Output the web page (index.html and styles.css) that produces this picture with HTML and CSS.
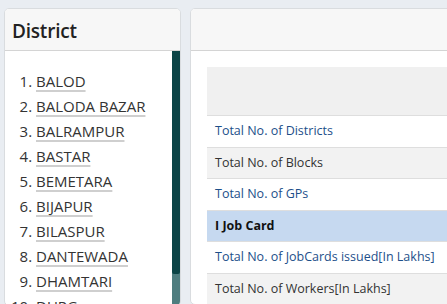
FILE: index.html
```html
<!DOCTYPE html>
<html>
<head>
<meta charset="utf-8">
<link rel="stylesheet" href="styles.css">
</head>
<body>
<div class="layout">
  <section class="card card-district">
    <header class="card-head"><h2 class="card-title">District</h2></header>
    <div class="card-scroll">
      <ol class="district-list">
        <li><a href="#">BALOD</a></li>
        <li><a href="#">BALODA BAZAR</a></li>
        <li><a href="#">BALRAMPUR</a></li>
        <li><a href="#">BASTAR</a></li>
        <li><a href="#">BEMETARA</a></li>
        <li><a href="#">BIJAPUR</a></li>
        <li><a href="#">BILASPUR</a></li>
        <li><a href="#">DANTEWADA</a></li>
        <li><a href="#">DHAMTARI</a></li>
        <li><a href="#">DURG</a></li>
        <li><a href="#">GARIYABAND</a></li>
        <li><a href="#">JANJGIR-CHAMPA</a></li>
      </ol>
      <div class="scrollbar"><div class="scroll-thumb"></div></div>
    </div>
  </section>
  <section class="card card-stats">
    <header class="card-head"></header>
    <div class="card-body">
      <table class="stats">
        <thead><tr><th></th></tr></thead>
        <tbody>
          <tr><td><a href="#">Total No. of Districts</a></td></tr>
          <tr class="alt"><td>Total No. of Blocks</td></tr>
          <tr><td><a href="#">Total No. of GPs</a></td></tr>
          <tr class="section"><td>I Job Card</td></tr>
          <tr><td><a href="#">Total No. of JobCards issued[In Lakhs]</a></td></tr>
          <tr class="alt"><td>Total No. of Workers[In Lakhs]</td></tr>
        </tbody>
      </table>
    </div>
  </section>
</div>
</body>
</html>
```
FILE: styles.css
```css
html {
  overflow: hidden;
}
body {
  margin: 0;
  background: #e9edf2;
  font-family: "Open Sans", "Noto Sans", sans-serif;
  color: #333;
}
.layout {
  display: flex;
  gap: 9px;
  padding: 8px 0 0 4px;
  align-items: flex-start;
}
.card {
  background: #fff;
  border: 1px solid #d9dcdf;
  border-radius: 5px;
  overflow: hidden;
  flex: none;
}
.card-district {
  width: 177px;
  box-sizing: border-box;
}
.card-stats {
  width: 320px;
}
.card-head {
  background: #f7f7f7;
  border-bottom: 1px solid #d4d4d4;
  box-sizing: border-box;
  height: 42px;
  display: flex;
  align-items: center;
  padding: 2px 7px 0;
}
.card-title {
  margin: 0;
  font-size: 19px;
  font-weight: 600;
  color: #222;
  letter-spacing: -0.2px;
}
.card-scroll {
  height: 254px;
  overflow: hidden;
  display: flex;
}
.district-list {
  flex: 1;
  margin: 0;
  padding: 18px 0 0 31px;
  font-size: 15px;
  line-height: 25px;
  color: #333;
}
.district-list a {
  color: #333;
  text-decoration: underline;
  text-decoration-color: #cfcfcf;
  text-decoration-thickness: 2px;
  text-underline-offset: 3px;
}
.scrollbar {
  width: 8px;
  flex: none;
  background: #4e7d7f;
}
.scroll-thumb {
  height: 223px;
  background: #0b4446;
  border-radius: 0 0 2px 2px;
}
.card-body {
  padding: 16px 0 0 16px;
}
.stats {
  width: 100%;
  border-collapse: collapse;
  font-size: 12.5px;
}
.stats th {
  height: 48px;
  background: #f0f0f0;
  padding: 0;
}
.stats td {
  padding: 6px 8px;
  line-height: 18.5px;
  border-top: 1px solid #dedede;
  white-space: nowrap;
  color: #333;
}
.stats a {
  color: #1d4f8a;
  text-decoration: none;
}
.stats .alt td {
  background: #f2f2f2;
}
.stats .section td {
  background: #c6d9f0;
  font-weight: 700;
  color: #111;
}
```
